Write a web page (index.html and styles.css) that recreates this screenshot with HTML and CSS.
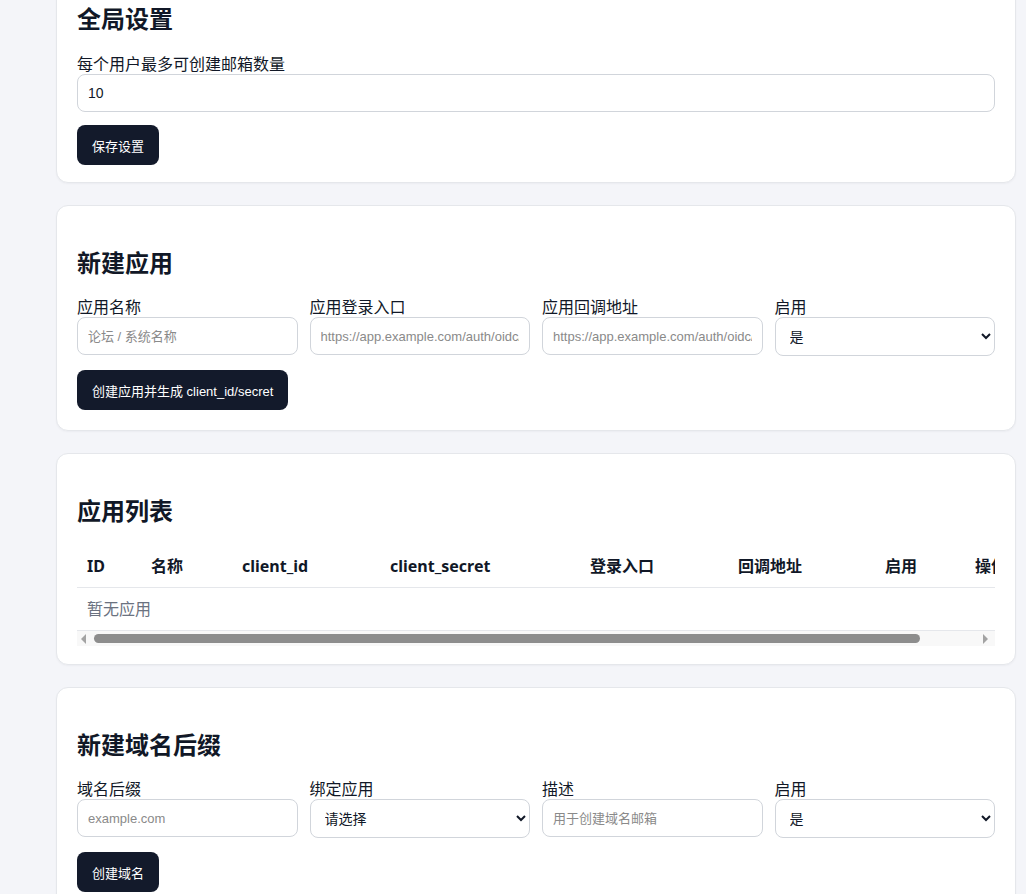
FILE: index.html
```html
<!DOCTYPE html>
<html lang="zh-CN">
<head>
    <meta charset="UTF-8">
    <meta name="viewport" content="width=device-width, initial-scale=1.0">
    <title>管理后台</title>
    <link rel="stylesheet" href="styles.css">
</head>
<body>
    <main class="admin">
        <section class="card card-first">
            <h2>全局设置</h2>
            <label for="max-mailboxes">每个用户最多可创建邮箱数量</label>
            <input id="max-mailboxes" type="number" value="10">
            <button class="btn">保存设置</button>
        </section>

        <section class="card">
            <h2>新建应用</h2>
            <div class="form-grid">
                <div class="field">
                    <label>应用名称</label>
                    <input type="text" placeholder="论坛 / 系统名称">
                </div>
                <div class="field">
                    <label>应用登录入口</label>
                    <input type="text" placeholder="https://app.example.com/auth/oidc/login">
                </div>
                <div class="field">
                    <label>应用回调地址</label>
                    <input type="text" placeholder="https://app.example.com/auth/oidc/callback">
                </div>
                <div class="field">
                    <label>启用</label>
                    <select>
                        <option>是</option>
                        <option>否</option>
                    </select>
                </div>
            </div>
            <button class="btn">创建应用并生成 client_id/secret</button>
        </section>

        <section class="card card-list">
            <h2>应用列表</h2>
            <div class="table-wrap">
                <table>
                    <thead>
                        <tr>
                            <th class="c-id">ID</th>
                            <th class="c-name">名称</th>
                            <th class="c-client">client_id</th>
                            <th class="c-secret">client_secret</th>
                            <th class="c-url">登录入口</th>
                            <th class="c-url2">回调地址</th>
                            <th class="c-on">启用</th>
                            <th class="c-op">操作</th>
                        </tr>
                    </thead>
                    <tbody>
                        <tr><td colspan="8" class="empty">暂无应用</td></tr>
                    </tbody>
                </table>
            </div>
            <!-- horizontal scroll track for the table -->
            <div class="hscroll">
                <span class="hscroll-arrow left"></span>
                <div class="hscroll-track">
                    <div class="hscroll-thumb" style="width: 826px"></div>
                </div>
                <span class="hscroll-arrow right"></span>
            </div>
        </section>

        <section class="card">
            <h2>新建域名后缀</h2>
            <div class="form-grid">
                <div class="field">
                    <label>域名后缀</label>
                    <input type="text" placeholder="example.com">
                </div>
                <div class="field">
                    <label>绑定应用</label>
                    <select>
                        <option>请选择</option>
                    </select>
                </div>
                <div class="field">
                    <label>描述</label>
                    <input type="text" placeholder="用于创建域名邮箱">
                </div>
                <div class="field">
                    <label>启用</label>
                    <select>
                        <option>是</option>
                        <option>否</option>
                    </select>
                </div>
            </div>
            <button class="btn">创建域名</button>
        </section>
    </main>
</body>
</html>
```

FILE: styles.css
```css
body { margin: 0; background: #f4f5f9; color: #111827; font-family: "Noto Sans", "Noto Sans CJK SC", sans-serif; overflow: hidden; }
.admin { width: 960px; margin-left: 56px; display: flex; flex-direction: column; gap: 22px; padding-bottom: 40px; }
.card { background: #fff; border: 1px solid #e5e7eb; border-radius: 12px; padding: 20px; box-shadow: 0 1px 2px rgba(17, 24, 39, 0.04); }
.card-first { margin-top: -39px; padding-bottom: 17px; }
.card-list { padding-bottom: 18px; }
h2 { font-size: 24px; line-height: 34px; margin: 20px 0 17px; font-weight: 700; }
.card-first h2 { margin-bottom: 18px; }
label { display: block; font-size: 16px; line-height: 20px; }
input, select { box-sizing: border-box; width: 100%; height: 38px; border: 1px solid #d1d5db; border-radius: 8px; padding: 0 10px; font-family: "Liberation Sans", "Noto Sans CJK SC", sans-serif; font-size: 14px; color: #111827; background: #fff; }
input::placeholder { font-size: 13px; color: #8a8a8a; }
select { height: 39px; }
.form-grid { display: grid; grid-template-columns: repeat(4, 1fr); gap: 12px; }
.btn { margin-top: 14px; height: 40px; padding: 0 15px; background: #131a2b; color: #fff; border: none; border-radius: 8px; font-family: "Liberation Sans", "Noto Sans CJK SC", sans-serif; font-size: 13px; cursor: pointer; }
.card-first .btn { margin-top: 13px; }

.table-wrap { overflow-x: hidden; }
table { width: 984px; border-collapse: collapse; table-layout: fixed; }
th, td { box-sizing: border-box; text-align: left; padding: 10px; font-size: 16px; line-height: 22px; border-bottom: 1px solid #e5e7eb; white-space: nowrap; }
th { font-weight: 700; }
.c-id { width: 64px; }
.c-name { width: 91px; }
.c-client { width: 148px; }
.c-secret { width: 200px; }
.c-url { width: 148px; }
.c-url2 { width: 147px; }
.c-on { width: 90px; }
.c-op { width: 96px; }
td.empty { color: #6b7280; }

.hscroll { display: flex; align-items: center; height: 15px; background: #f8f8f8; }
.hscroll-arrow { width: 0; height: 0; border-top: 5px solid transparent; border-bottom: 5px solid transparent; }
.hscroll-arrow.left { border-right: 5px solid #a3a3a3; margin: 0 6px 0 4px; }
.hscroll-arrow.right { border-left: 5px solid #a3a3a3; margin: 0 7px 0 6px; }
.hscroll-track { flex: 1; display: flex; align-items: center; }
.hscroll-thumb { height: 9px; background: #8d8d8d; border-radius: 5px; margin-left: 2px; }
```
